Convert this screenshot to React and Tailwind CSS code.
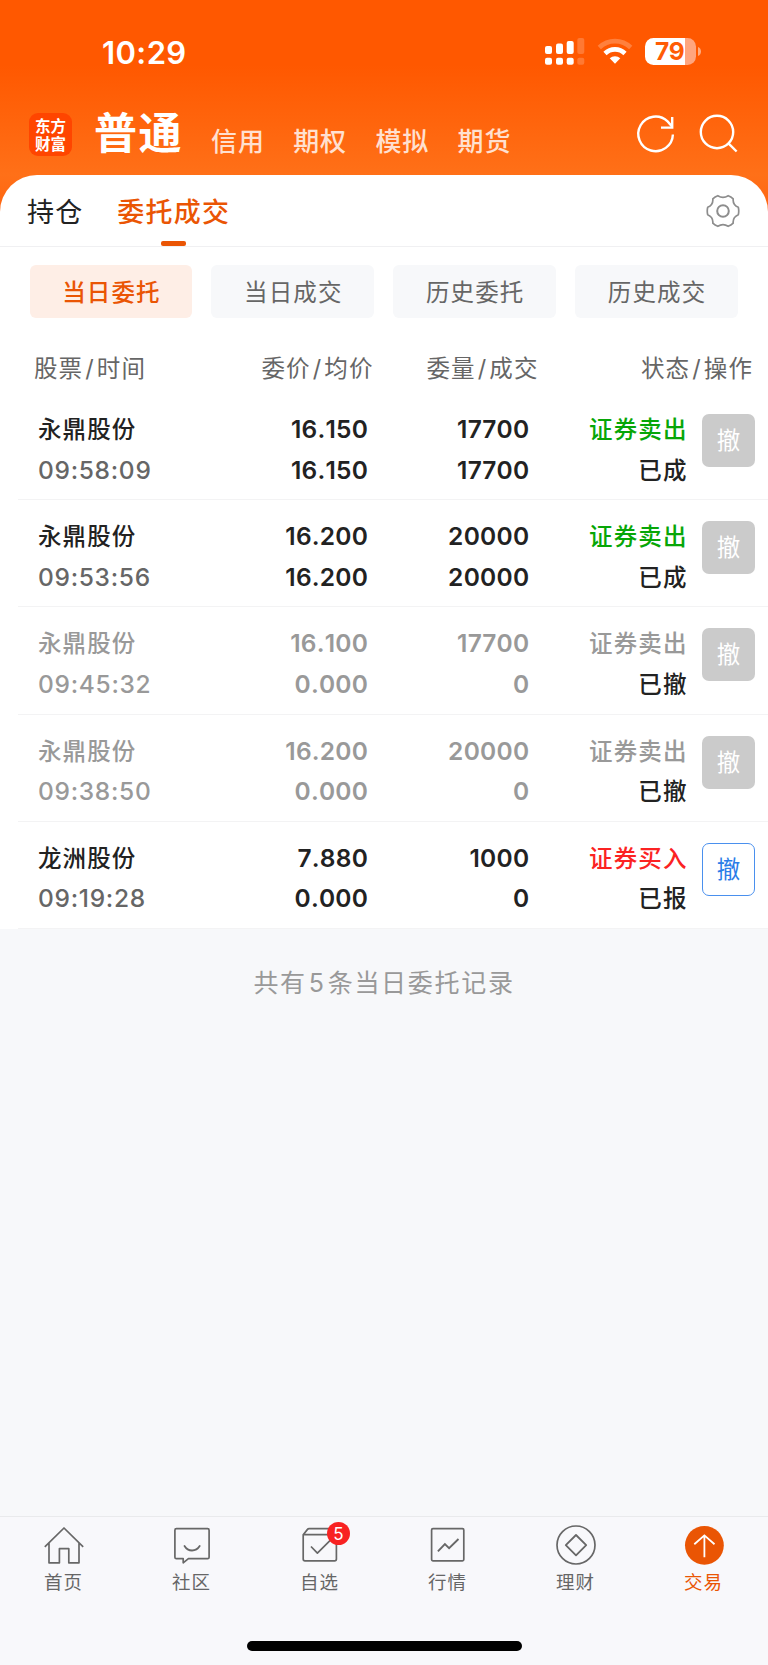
import React from "react";

const MODES = ["信用", "期权", "模拟", "期货"];
const FILTERS = ["当日委托", "当日成交", "历史委托", "历史成交"];

const ORDERS = [
  { name: "永鼎股份", time: "09:58:09", price: "16.150", avg: "16.150", qty: "17700", done: "17700", side: "证券卖出", state: "已成", kind: "sell" },
  { name: "永鼎股份", time: "09:53:56", price: "16.200", avg: "16.200", qty: "20000", done: "20000", side: "证券卖出", state: "已成", kind: "sell" },
  { name: "永鼎股份", time: "09:45:32", price: "16.100", avg: "0.000", qty: "17700", done: "0", side: "证券卖出", state: "已撤", kind: "void" },
  { name: "永鼎股份", time: "09:38:50", price: "16.200", avg: "0.000", qty: "20000", done: "0", side: "证券卖出", state: "已撤", kind: "void" },
  { name: "龙洲股份", time: "09:19:28", price: "7.880", avg: "0.000", qty: "1000", done: "0", side: "证券买入", state: "已报", kind: "buy" },
];

const SIDE_COLOR = { sell: "text-[#07a607]", void: "text-[#999999]", buy: "text-[#fb2323]" };

function SignalIcon() {
  return (
    <svg className="h-[28px] w-[40px]" viewBox="0 0 40 28" fill="#fff">
      <rect x="0" y="9" width="7" height="8" rx="2" />
      <rect x="11" y="6.5" width="7" height="10.5" rx="2" />
      <rect x="21.7" y="4" width="7" height="13" rx="2" />
      <rect x="32.3" y="1" width="7" height="16" rx="2" opacity=".2" />
      <rect x="0" y="20.7" width="7" height="7" rx="2" />
      <rect x="11" y="20.7" width="7" height="7" rx="2" />
      <rect x="21.7" y="20.7" width="7" height="7" rx="2" />
      <rect x="32.3" y="20.7" width="7" height="7" rx="2" opacity=".2" />
    </svg>
  );
}

function WifiIcon() {
  return (
    <svg className="h-[26px] w-[36px]" viewBox="0 0 36 26" fill="none" stroke="#fff" strokeWidth="4.6">
      <path d="M2.3 9.5a22.5 22.5 0 0 1 31.4 0" opacity=".24" />
      <path d="M8 15.5a14.3 14.3 0 0 1 20 0" />
      <path d="M18 25.8l-5.3-5.5a7.6 7.6 0 0 1 10.6 0z" fill="#fff" stroke="none" />
    </svg>
  );
}

function Battery() {
  return (
    <div className="flex items-center gap-[2px]">
      <div className="flex h-[27px] w-[51px] items-center rounded-[8.5px] bg-[linear-gradient(90deg,#fff_40px,#ffa57e_40px)]">
        <span className="pl-[10px] text-[24.5px] leading-[27px] font-bold tracking-[-0.3px] text-[#ff5c05]">79</span>
      </div>
      <svg className="h-[9px] w-[3px]" viewBox="0 0 3 9"><path d="M0 0c4 1.6 4 7.4 0 9z" fill="#fff" opacity=".5" /></svg>
    </div>
  );
}

const TAB_ICONS = {
  首页: (
    <svg className="h-[42px] w-[42px]" viewBox="0 0 42 42" fill="none" stroke="#676767" strokeWidth="1.7" strokeLinejoin="round">
      <path d="M1.8 21.8L21 3l19.2 18.8M6 17.8v20h10.4V23.7h9.4v14.1H36v-20" />
    </svg>
  ),
  社区: (
    <svg className="h-[42px] w-[42px]" viewBox="0 0 42 42" fill="none" stroke="#676767" strokeWidth="1.7" strokeLinejoin="round" strokeLinecap="round">
      <path d="M5.4 3.7h31.2q1.5 0 1.5 1.5v27q0 1.5-1.5 1.5H17.4l-5.2 4.1v-4.1H5.4q-1.5 0-1.5-1.5v-27q0-1.5 1.5-1.5z" />
      <path d="M13.5 21c3.6 6 11.4 6 15.2 0" strokeWidth="1.8" />
    </svg>
  ),
  自选: (
    <svg className="h-[42px] w-[42px]" viewBox="0 0 42 42" fill="none" stroke="#676767" strokeWidth="1.7" strokeLinejoin="round">
      <path d="M4.2 9.7h33.2v24.4q0 1.8-1.8 1.8H6q-1.8 0-1.8-1.8zM4.2 9.7l4.1-5.1q.7-.9 1.8-.9h21.4q1.1 0 1.8.9l4.1 5.1" />
      <path d="M12 21.5l6.4 6.6 12.8-12.8" />
    </svg>
  ),
  行情: (
    <svg className="h-[42px] w-[42px]" viewBox="0 0 42 42" fill="none" stroke="#676767" strokeWidth="1.7">
      <rect x="4.6" y="3.7" width="32.2" height="32.2" rx="1.3" />
      <path d="M10.9 26.3l7-7.3 4.2 4.1 9.4-9.1" strokeWidth="1.9" />
    </svg>
  ),
  理财: (
    <svg className="h-[42px] w-[42px]" viewBox="0 0 42 42" fill="none" stroke="#676767" strokeWidth="1.7" strokeLinejoin="round">
      <circle cx="21" cy="20" r="19" />
      <path d="M21 10l10.2 10.2L21 30.4 10.8 20.2z" strokeWidth="1.8" />
    </svg>
  ),
  交易: (
    <svg className="h-[42px] w-[42px]" viewBox="0 0 42 42" fill="none" stroke="#fff" strokeWidth="1.8">
      <circle cx="21.4" cy="20.3" r="19.4" fill="#ea5504" stroke="none" />
      <path d="M21.4 32.2V10.8M11.3 19.2l10.1-8.8 10.1 8.8" />
    </svg>
  ),
};

function OrderRow({ o }) {
  const muted = o.kind === "void";
  const main = muted ? "text-[#999999]" : "text-[#222222]";
  const time = muted ? "text-[#999999]" : "text-[#666666]";
  return (
    <div className="ml-[18px] flex h-[107.1px] border-b border-[#f3f3f4] pt-[17px] leading-[40.7px] font-medium">
      <div className="w-[170px] pl-[20px]">
        <div className={`text-[23.5px] tracking-[1.1px] ${main}`}>{o.name}</div>
        <div className={`-mt-[1px] text-[24.5px] tracking-[0.7px] [font-kerning:none] ${time}`}>{o.time}</div>
      </div>
      <div className={`-mt-[1px] w-[180px] text-right text-[24.5px] tracking-[0.2px] font-semibold [font-kerning:none] ${main}`}>
        <div>{o.price}</div>
        <div>{o.avg}</div>
      </div>
      <div className={`-mt-[1px] w-[161.5px] text-right text-[24.5px] tracking-[0.3px] font-semibold [font-kerning:none] ${main}`}>
        <div>{o.qty}</div>
        <div>{o.done}</div>
      </div>
      <div className="w-[158px] text-right text-[23.5px] tracking-[1.1px]">
        <div className={SIDE_COLOR[o.kind]}>{o.side}</div>
        <div className="text-[#222222]">{o.state}</div>
      </div>
      <button
        className={`mt-[4px] ml-[14.5px] h-[53px] w-[53px] rounded-[7px] text-center text-[23.5px] font-normal ${
          o.kind === "buy" ? "border border-[#4a90ee] bg-white leading-[52px] text-[#2a7de8]" : "bg-[#cbcbcb] leading-[54px] text-white"
        }`}
      >
        撤
      </button>
    </div>
  );
}

export default function App() {
  return (
    <div className="flex h-[1665px] w-[768px] flex-col overflow-hidden bg-[#f7f8fa] font-['Inter','Noto_Sans_CJK_SC',sans-serif]">
      <div className="bg-[linear-gradient(180deg,#ff5800_0px,#ff5800_65px,#ff7018_175px,#ff6410_215px)]">
        <div className="flex h-[105px] items-start">
          <div className="mt-[33px] ml-[102px] w-[443px] text-[31px] leading-[40px] font-semibold tracking-[0.4px] text-white">10:29</div>
          <div className="mt-[37px]"><SignalIcon /></div>
          <div className="mt-[38px] ml-[11.5px]"><WifiIcon /></div>
          <div className="mt-[38px] ml-[12.5px]"><Battery /></div>
        </div>
        <div className="flex h-[70px] items-start">
          <div className="mt-[8px] ml-[29px] flex h-[43px] w-[43px] items-center justify-center rounded-[9px] bg-[#ff4500] text-center font-['Noto_Sans_CJK_SC',sans-serif] text-[15.5px] leading-[17.5px] font-bold text-white">
            <p className="w-[32px] break-all">东方财富</p>
          </div>
          <div className="ml-[22px] w-[117px] text-[43px] leading-[57px] font-bold tracking-[1.5px] text-white">普通</div>
          <div className="mt-[16.5px] flex gap-[28.4px] text-[26px] leading-[40px] font-medium tracking-[0.9px] text-[#ffe0d0]">
            {MODES.map((m) => <span key={m}>{m}</span>)}
          </div>
          <svg className="mt-[9px] ml-auto h-[42px] w-[42px]" viewBox="0 0 42 42" fill="none" stroke="#fff" strokeWidth="2.4">
            <path d="M37.9 20.5A17.3 17.3 0 1 1 32.6 7.4L37 12.5" />
            <path d="M37.2 3v10.6H26" />
          </svg>
          <svg className="mt-[9px] mr-[29px] ml-[20px] h-[42px] w-[42px]" viewBox="0 0 42 42" fill="none" stroke="#fff" strokeWidth="2.4">
            <circle cx="20" cy="18" r="16.2" />
            <path d="M31.2 29.2l8.4 8.3" />
          </svg>
        </div>
        <div className="flex h-[71.5px] items-start rounded-t-[37px] border-b border-[#f0f0f2] bg-white text-[27px] leading-[40px] tracking-[1.3px]">
          <div className="mt-[17.5px] ml-[27px] w-[90px] text-[#222222]">持仓</div>
          <div className="flex h-full w-[113.5px] flex-col items-center justify-between pt-[17.5px] font-medium text-[#ea5504]">
            <span className="whitespace-nowrap">委托成交</span>
            <span className="h-[5px] w-[25px] rounded-[2px] bg-[#ea5504]" />
          </div>
          <svg className="mt-[19px] mr-[28px] ml-auto h-[34px] w-[34px]" viewBox="0 0 34 34" fill="none" stroke="#8d8d8d" strokeWidth="1.7" strokeLinejoin="round">
            <path d="M11.8 1.7 Q17 5 22.2 1.7 Q25 2.6 27.2 4.800 Q26.600 10.800 32.300 13.200 Q33.200 17 32.300 20.800 Q26.600 23.200 27.200 29.200 Q25 31.400 22.200 32.300 Q17 29 11.800 32.300 Q9 31.400 6.800 29.200 Q7.400 23.200 1.700 20.800 Q0.800 17 1.700 13.200 Q7.400 10.800 6.800 4.800 Q9 2.600 11.800 1.700 Z" />
            <circle cx="17" cy="17" r="5.8" strokeWidth="2" />
          </svg>
        </div>
      </div>

      <div className="bg-white">
        <div className="flex gap-[19.1px] pt-[18.5px] pl-[29.5px] text-[23.5px] leading-[55px] tracking-[1.1px]">
          {FILTERS.map((f, i) => (
            <div key={f} className={`h-[53px] w-[162.8px] rounded-[6px] pl-[1px] text-center ${i === 0 ? "bg-[#feeee6] font-medium text-[#ea5504]" : "bg-[#f7f8fa] text-[#666666]"}`}>
              {f}
            </div>
          ))}
        </div>
        <div className="flex h-[75.3px] pt-[31px] text-[23.5px] leading-[40px] tracking-[1.1px] text-[#666666]">
          <div className="w-[174px] pl-[34px]">股票<span className="px-[2px]">/</span>时间</div>
          <div className="w-[199.5px] text-right">委价<span className="px-[2px]">/</span>均价</div>
          <div className="w-[165px] text-right">委量<span className="px-[2px]">/</span>成交</div>
          <div className="w-[214.5px] text-right">状态<span className="px-[2px]">/</span>操作</div>
        </div>
        {ORDERS.map((o) => <OrderRow key={o.time} o={o} />)}
      </div>

      <div className="mt-[34px] text-center text-[25px] leading-[40px] tracking-[1.7px] text-[#999999]">
        共有<span className="px-[2px]">5</span>条当日委托记录
      </div>

      <div className="mt-auto h-[149px] border-t border-[#e9eaec] bg-[#f8f8fb]">
        <div className="grid h-[121px] grid-cols-6">
          {Object.keys(TAB_ICONS).map((t) => (
            <div key={t} className="relative flex flex-col items-center pt-[8px]">
              {TAB_ICONS[t]}
              <span className={`-ml-[1px] text-[18.5px] leading-[30px] tracking-[1px] ${t === "交易" ? "text-[#ea5504]" : "text-[#666666]"}`}>{t}</span>
              {t === "自选" && (
                <span className="absolute top-[5px] left-[71px] h-[23px] w-[23px] rounded-full bg-[#f82222] text-center text-[17px] leading-[24px] text-white">5</span>
              )}
            </div>
          ))}
        </div>
        <div className="mx-auto mt-[3px] h-[10px] w-[275px] rounded-full bg-black" />
      </div>
    </div>
  );
}
